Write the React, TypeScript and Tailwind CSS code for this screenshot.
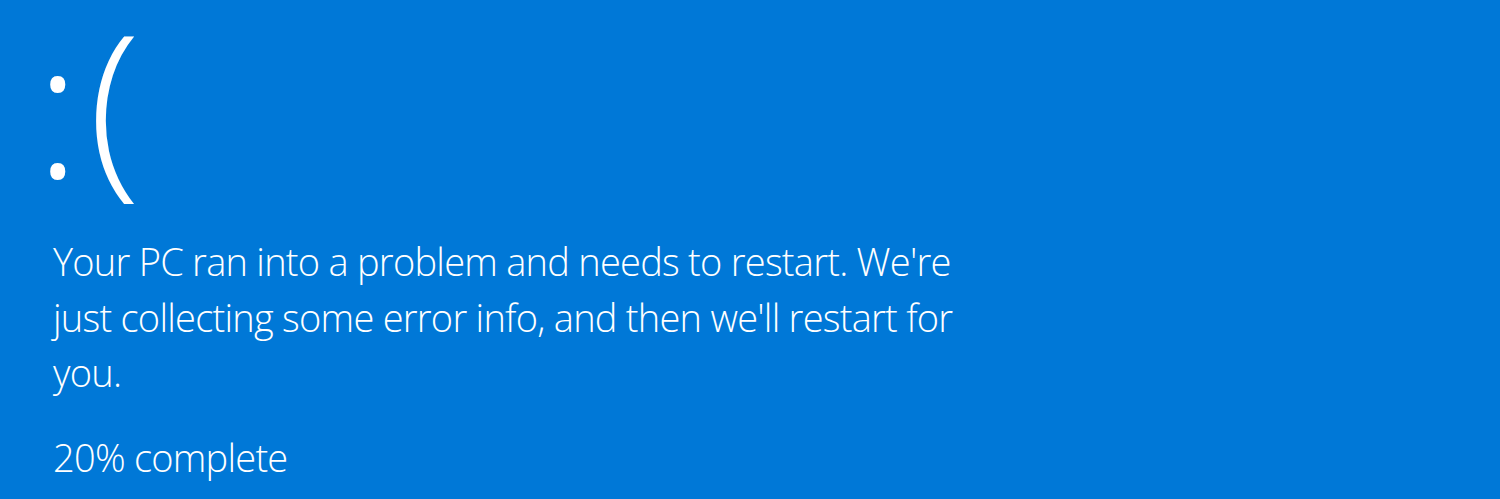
export default function App() {
  return (
    <div className="w-[1500px] h-[499px] overflow-hidden bg-[#0078d7] text-white font-['Open_Sans',sans-serif] font-light">
      <div className="pl-[40px]">
        <div className="flex h-[234px] items-start">
          <span className="-mt-[28px] -ml-[5px] text-[190px] leading-[1.4]">:</span>
          <span className="-mt-[34px] ml-[8px] text-[192px] leading-[1.4]">(</span>
        </div>
        <p className="ml-[13px] w-[940px] text-[38px] leading-[55.5px] tracking-[-0.75px]">
          Your PC ran into a problem and needs to restart. We're just
          collecting some error info, and then we'll restart for you.
        </p>
        <p className="mt-[29px] ml-[13px] text-[38px] leading-[55.5px] tracking-[-0.75px]">20% complete</p>
      </div>
    </div>
  );
}
